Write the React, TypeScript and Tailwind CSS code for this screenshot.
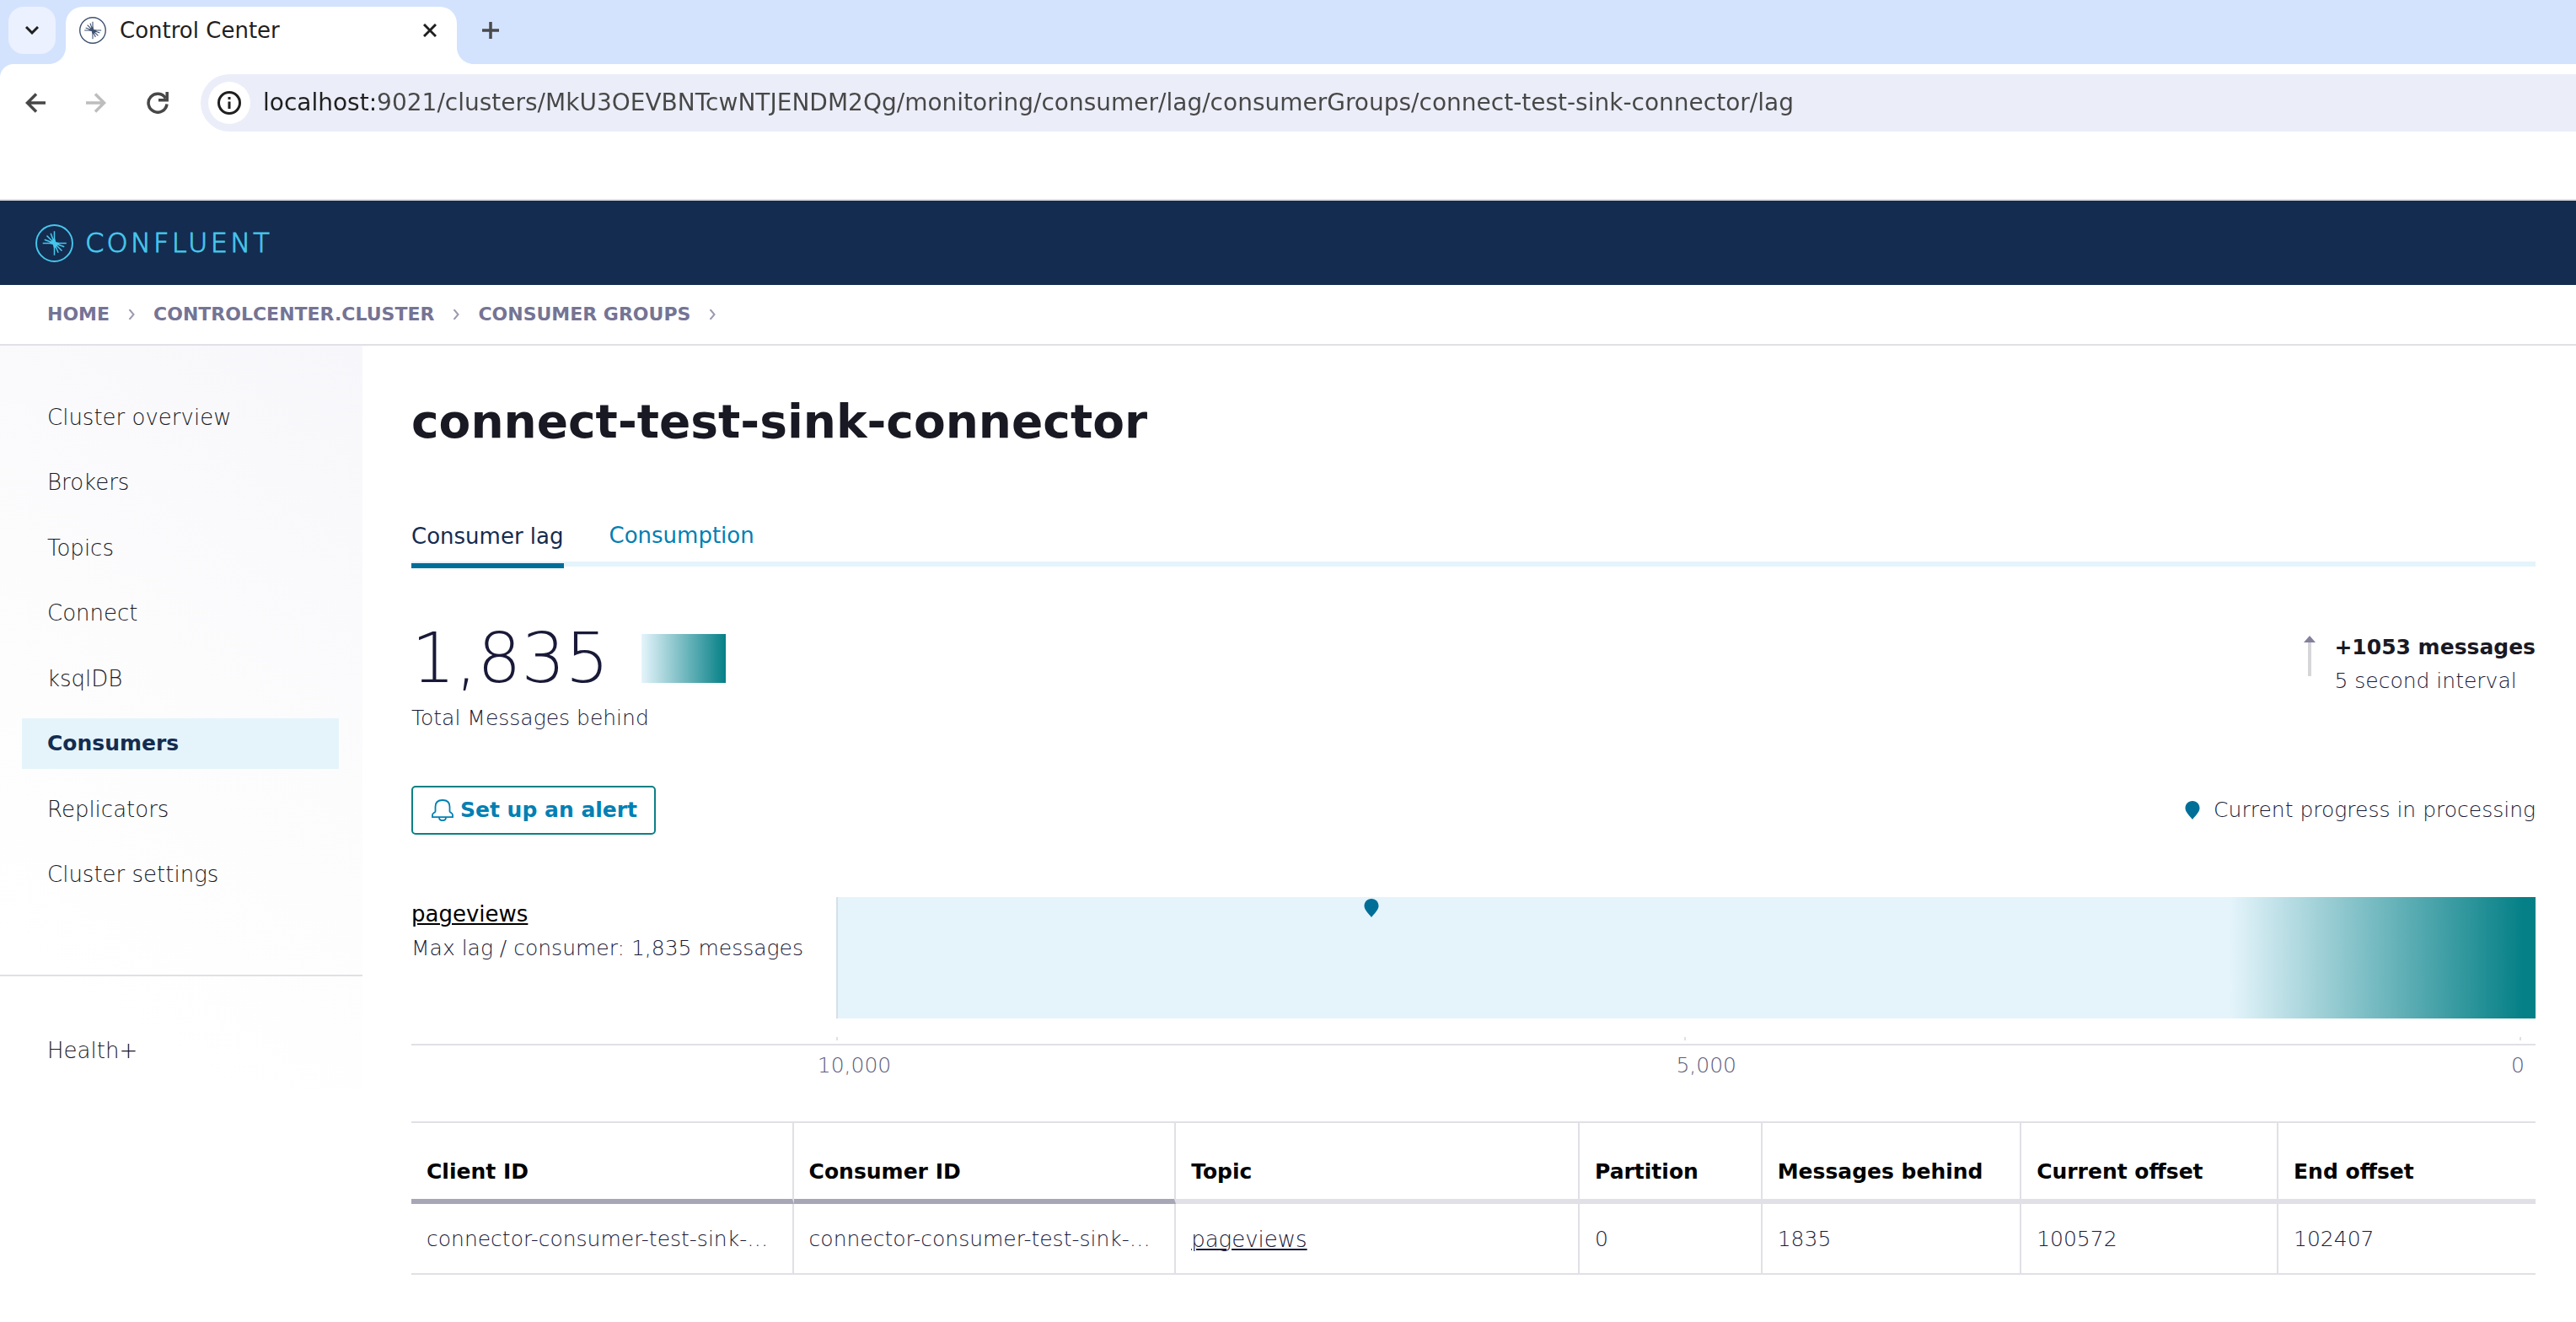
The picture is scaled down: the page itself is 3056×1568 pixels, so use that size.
import React from "react";

const URL_TEXT =
  "localhost:9021/clusters/MkU3OEVBNTcwNTJENDM2Qg/monitoring/consumer/lag/consumerGroups/connect-test-sink-connector/lag";

const NAV = [
  "Cluster overview",
  "Brokers",
  "Topics",
  "Connect",
  "ksqlDB",
  "Consumers",
  "Replicators",
  "Cluster settings",
];

const CRUMBS = ["HOME", "CONTROLCENTER.CLUSTER", "CONSUMER GROUPS"];

const COLUMNS = [
  { label: "Client ID", width: "w-[18%]", strong: true },
  { label: "Consumer ID", width: "w-[18%]", strong: true },
  { label: "Topic", width: "w-[19%]", strong: false },
  { label: "Partition", width: "w-[8.6%]", strong: false },
  { label: "Messages behind", width: "w-[12.2%]", strong: false },
  { label: "Current offset", width: "w-[12.1%]", strong: false },
  { label: "End offset", width: "w-[12.1%]", strong: false },
];

const ROWS = [
  [
    "connector-consumer-test-sink-…",
    "connector-consumer-test-sink-…",
    "pageviews",
    "0",
    "1835",
    "100572",
    "102407",
  ],
];

/* Circle with a compass-like burst of rays, drawn in the current colour. */
function BurstMark({ className }: { className: string }) {
  return (
    <svg viewBox="0 0 44 44" className={className} fill="none" stroke="currentColor" aria-hidden="true">
      <circle cx="22" cy="22" r="21" strokeWidth="1.900" />
      <path
        d="M22 22V8M22 22H8.500M22 22 17.800 10.500M22 22 13.200 13.200M22 22 10.500 17.800M22 22V36M22 22H36M22 22 26.500 33M22 22 30.800 30.800M22 22 33.500 26.200"
        strokeWidth="1.500"
      />
      <path d="M22 15 23.800 20.500 29 22 24.500 24.500 22 29 20.200 23.500 15 22 19.500 19.500Z" fill="currentColor" stroke="none" />
    </svg>
  );
}

function Pin({ className }: { className: string }) {
  return (
    <svg viewBox="0 0 18 22" className={className} fill="#006f98" aria-hidden="true">
      <path d="M9 0C3.800 0 .5 3.800.5 8.600c0 4 3.600 7.600 8.500 13.400 4.900-5.800 8.500-9.400 8.500-13.400C17.500 3.800 14.200 0 9 0Z" />
    </svg>
  );
}

function TabStrip() {
  return (
    <div className="flex h-[76px] items-start bg-[#d3e3fd] pt-2 pl-[10px]">
      <button aria-label="Search tabs" className="flex size-14 items-center justify-center rounded-[18px] bg-[#ebf1fe]">
        <svg viewBox="0 0 16 10" className="h-[10px] w-4" fill="none" stroke="#1f1f1f" strokeWidth="3" aria-hidden="true">
          <path d="M1 1 8 8 15 1" />
        </svg>
      </button>
      <div className="flex h-[68px] items-end">
        <svg viewBox="0 0 20 20" className="-mr-2 ml-[-8px] size-5" aria-hidden="true">
          <path d="M20 0V20H0C11 20 20 11 20 0Z" fill="#fff" />
        </svg>
        <div className="ml-2 flex h-[68px] w-[464px] items-start rounded-t-[20px] bg-white px-4 pt-2">
          <div className="flex h-10 w-full items-center">
            <BurstMark className="size-8 text-[#3d5170]" />
            <span className="ml-4 flex-1 text-[26px] leading-10 text-[#1f1f1f]">Control Center</span>
            <button aria-label="Close tab" className="flex size-8 items-center justify-center">
              <svg viewBox="0 0 16 16" className="size-4" stroke="#1f1f1f" strokeWidth="3" aria-hidden="true">
                <path d="M1 1 15 15M15 1 1 15" />
              </svg>
            </button>
          </div>
        </div>
        <svg viewBox="0 0 20 20" className="size-5" aria-hidden="true">
          <path d="M0 0V20H20C9 20 0 11 0 0Z" fill="#fff" />
        </svg>
      </div>
      <button aria-label="New tab" className="flex h-14 w-10 items-center justify-center">
        <svg viewBox="0 0 20 20" className="size-5" stroke="#4a4a4a" strokeWidth="3.500" aria-hidden="true">
          <path d="M10 0V20M0 10H20" />
        </svg>
      </button>
    </div>
  );
}

function Toolbar() {
  return (
    <div className="border-b-2 border-[#dfe1e2] bg-[#d3e3fd]">
      <div className="flex h-40 items-start rounded-tl-[16px] bg-white pt-3">
        <div className="flex h-[68px] w-[238px] shrink-0 items-center gap-12 pl-[30px]">
          <button aria-label="Back">
            <svg viewBox="0 0 24 24" className="size-6" fill="none" stroke="#474747" strokeWidth="3.500" aria-hidden="true">
              <path d="M24 12H3M13 1.500 2.500 12 13 22.500" />
            </svg>
          </button>
          <button aria-label="Forward">
            <svg viewBox="0 0 24 24" className="size-6" fill="none" stroke="#bdbdbd" strokeWidth="3.500" aria-hidden="true">
              <path d="M0 12H21M11 1.500 21.500 12 11 22.500" />
            </svg>
          </button>
          <button aria-label="Reload">
            <svg viewBox="0 0 26 26" className="size-[26px]" fill="none" stroke="#474747" strokeWidth="3.500" aria-hidden="true">
              <path d="M22.500 7.500A11 11 0 1 0 24 14.500" />
              <path d="M24.200 0V9.700H14" />
            </svg>
          </button>
        </div>
        <div className="flex h-[68px] flex-1 items-center rounded-l-full bg-[#ebeef8] pl-[9px]">
          <button aria-label="Site information" className="flex size-[50px] shrink-0 items-center justify-center rounded-full bg-white">
            <svg viewBox="0 0 28 28" className="size-7" fill="none" stroke="#1f1f1f" strokeWidth="3" aria-hidden="true">
              <circle cx="14" cy="14" r="12.500" />
              <path d="M14 12.500V21M14 7V10" />
            </svg>
          </button>
          <input
            aria-label="Address"
            readOnly
            value={URL_TEXT}
            className="ml-[15px] min-w-0 flex-1 bg-[linear-gradient(90deg,#1f1f1f_134px,#474747_134px)] bg-clip-text text-[28px] leading-10 text-transparent outline-none"
          />
        </div>
      </div>
    </div>
  );
}

function Breadcrumbs() {
  return (
    <nav aria-label="Breadcrumb" className="flex h-[72px] items-center border-b-2 border-[#e0e0e6] px-14">
      {CRUMBS.map((c) => (
        <React.Fragment key={c}>
          <a href="#" className="text-[22px] leading-8 font-bold text-[#757494]">
            {c}
          </a>
          <svg viewBox="0 0 8 12" className="mx-[22px] h-3 w-2" fill="none" stroke="#9b9ab0" strokeWidth="2" aria-hidden="true">
            <path d="M1.500 0 6.500 6 1.500 12" />
          </svg>
        </React.Fragment>
      ))}
    </nav>
  );
}

function NavLink({ label, active = false }: { label: string; active?: boolean }) {
  return (
    <a
      href="#"
      aria-current={active ? "page" : undefined}
      className={
        active
          ? "mr-7 ml-[26px] block bg-[#e5f4fb] px-[30px] text-[25px] leading-[60px] font-bold text-[#142c50]"
          : "mr-7 ml-[26px] block px-[30px] text-[26px] leading-[60px] font-extralight text-[#191924]"
      }
    >
      {label}
    </a>
  );
}

function Sidebar() {
  return (
    <aside className="w-[430px] shrink-0 bg-[linear-gradient(215deg,#f7f7fb,#fcfcfd_45%,#fff_85%)] pb-4">
      <nav aria-label="Cluster" className="border-b-2 border-[#e0e0e4] pt-[55px] pb-[89px]">
        <div className="flex h-[602px] flex-col justify-between">
          {NAV.map((n) => (
            <NavLink key={n} label={n} active={n === "Consumers"} />
          ))}
        </div>
      </nav>
      <div className="pt-[58px]">
        <NavLink label="Health+" />
      </div>
    </aside>
  );
}

function Summary() {
  return (
    <section className="mt-14 flex items-start justify-between">
      <div>
        <div className="flex items-center gap-[38px]">
          <span className="text-[82px] leading-[106px] font-extralight text-[#191938]">1,835</span>
          <span className="h-[58px] w-[100px] bg-[linear-gradient(90deg,#e5f4fb,#048086)]" />
        </div>
        <p className="text-[25px] leading-9 font-extralight text-[#191938]">Total Messages behind</p>
      </div>
      <div className="mt-5 flex gap-[22px]">
        <svg viewBox="0 0 14 50" className="mt-[6px] h-[50px] w-[14px]" aria-hidden="true">
          <path d="M7 6V48" stroke="#d6d6d8" strokeWidth="4" />
          <path d="M7 0 14 8H0Z" fill="#82809a" />
        </svg>
        <div className="text-[25px] leading-10">
          <p className="font-bold text-[#191924]">+1053 messages</p>
          <p className="font-extralight text-[#191938]">5 second interval</p>
        </div>
      </div>
    </section>
  );
}

function LagChart() {
  return (
    <section className="mt-[74px]">
      <div className="flex border-b-2 border-[#e0e0e6]">
        <div className="w-1/5 shrink-0 pr-2 text-[25px] leading-10 whitespace-nowrap">
          <a href="#" className="text-[26px] text-black underline decoration-2 underline-offset-2">
            pageviews
          </a>
          <p className="font-extralight text-[#191938]">Max lag / consumer: 1,835 messages</p>
        </div>
        <div className="flex-1">
          <div className="relative flex h-36 justify-end border-l-2 border-[#d5dfe8] bg-[#e5f4fb]">
            <Pin className="absolute top-[2px] left-[31%] h-[22px] w-[18px]" />
            <div className="w-[18%] bg-[linear-gradient(90deg,#e5f4fb,#048086_96%)]" />
          </div>
          <div className="mt-[22px] mb-1 grid h-1 grid-cols-2 pr-[17px]">
            <i className="border-l-2 border-[#e0e0e6]" />
            <i className="ml-[6px] border-x-2 border-[#e0e0e6]" />
          </div>
        </div>
      </div>
      <div className="ml-[19%] grid grid-cols-2 pt-1 pr-[13px] pl-[3px] text-[25px] leading-10 font-extralight text-[#5b5a7c]">
        <span>10,000</span>
        <span className="flex justify-between pl-[6px]">
          <span>5,000</span>
          <span>0</span>
        </span>
      </div>
    </section>
  );
}

function OffsetsTable() {
  return (
    <table className="mt-[46px] w-full table-fixed border-separate border-spacing-0 text-left text-[25px]">
      <thead>
        <tr>
          {COLUMNS.map((c) => (
            <th
              key={c.label}
              className={
                c.width +
                " h-[98px] border-t-2 border-t-[#e0e0e6] px-[18px] pt-[26px] leading-10 font-bold text-black border-b-[6px] not-last:border-r-2 not-last:border-r-[#e0e0e6] " +
                (c.strong ? "border-b-[#a6a6b6]" : "border-b-[#e0e0e6]")
              }
            >
              {c.label}
            </th>
          ))}
        </tr>
      </thead>
      <tbody>
        {ROWS.map((row, i) => (
          <tr key={i}>
            {row.map((cell, j) => (
              <td
                key={j}
                className="h-[84px] border-b-2 border-[#e0e0e6] px-[18px] pt-[2px] leading-10 font-extralight whitespace-nowrap text-[#191938] not-last:border-r-2"
              >
                {j === 2 ? (
                  <a href="#" className="text-[26px] underline decoration-2 underline-offset-2">
                    {cell}
                  </a>
                ) : (
                  cell
                )}
              </td>
            ))}
          </tr>
        ))}
      </tbody>
    </table>
  );
}

export default function App() {
  return (
    <div className="min-h-screen bg-white font-['DejaVu_Sans',sans-serif] text-[#191924]">
      <TabStrip />
      <Toolbar />
      <header className="flex h-[100px] items-center bg-[#142c50] pl-[42px] text-[#46c6ec]">
        <BurstMark className="size-[45px]" />
        <span className="ml-[14px] text-[32px] leading-10 font-extralight tracking-widest [-webkit-text-stroke:1px_currentColor]">
          CONFLUENT
        </span>
      </header>
      <Breadcrumbs />
      <div className="flex items-start">
        <Sidebar />
        <main className="min-w-0 flex-1 pt-[58px] pr-12 pl-[58px]">
          <h1 className="text-[55px] leading-[64px] font-bold text-[#191924]">connect-test-sink-connector</h1>
          <div role="tablist" className="mt-[79px] flex gap-[54px] border-b-[6px] border-[#e5f4fb] text-[26px] leading-12">
            <button role="tab" aria-selected="true" className="-mb-2 border-b-[6px] border-[#006f98] pb-[7px] text-[#142c50]">
              Consumer lag
            </button>
            <button role="tab" aria-selected="false" className="pb-[7px] text-[#0080b4]">
              Consumption
            </button>
          </div>
          <Summary />
          <div className="mt-[62px] flex items-center justify-between">
            <button className="flex h-[58px] items-center rounded-[5px] border-2 border-[#0b8086] pr-5 pl-[22px] text-[25px] font-bold text-[#0080b4]">
              <svg viewBox="0 0 26 26" className="mr-2 size-[26px]" fill="none" stroke="currentColor" strokeWidth="1.800" aria-hidden="true">
                <path d="M4.500 14.500V9C4.500 4 7.500 1 13 1s8.500 3 8.500 8v5.500c0 1 3.500 2 3.500 4V21.200H1V18.500c0-2 3.500-3 3.500-4ZM9 21.500c0 2.500 1.500 3.700 4 3.700s4-1.200 4-3.700" />
              </svg>
              Set up an alert
            </button>
            <p className="flex items-center gap-4 text-[25px] leading-10 font-extralight text-[#191938]">
              <Pin className="h-[22px] w-[18px]" />
              Current progress in processing
            </p>
          </div>
          <LagChart />
          <OffsetsTable />
        </main>
      </div>
    </div>
  );
}
